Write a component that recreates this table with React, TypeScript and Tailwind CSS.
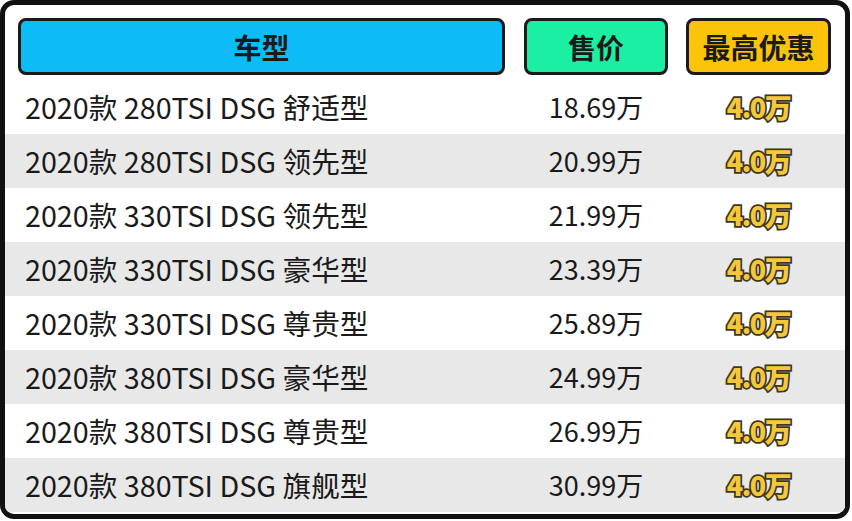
import React from "react";

interface Row {
  name: string;
  price: string;
}

const rows: Row[] = [
  {name: "2020款 280TSI DSG 舒适型", price: "18.69万"},
  {name: "2020款 280TSI DSG 领先型", price: "20.99万"},
  {name: "2020款 330TSI DSG 领先型", price: "21.99万"},
  {name: "2020款 330TSI DSG 豪华型", price: "23.39万"},
  {name: "2020款 330TSI DSG 尊贵型", price: "25.89万"},
  {name: "2020款 380TSI DSG 豪华型", price: "24.99万"},
  {name: "2020款 380TSI DSG 尊贵型", price: "26.99万"},
  {name: "2020款 380TSI DSG 旗舰型", price: "30.99万"},
];

const font = "font-['Noto_Sans_CJK_SC','Noto_Sans',sans-serif]";

const HeaderCell = ({label, className}: {label: string; className: string}) => (
  <div
    className={`h-[57px] flex items-center justify-center rounded-[8px] border-[3px] border-[#1a1a1a] text-[28px] font-bold text-[#1a1a1a] ${className}`}
  >
    {label}
  </div>
);

const App = () => {
  return (
    <div className={`w-[852px] h-[521px] bg-white ${font}`}>
      <div className="w-[850px] h-[519px] border-[5px] border-[#111] rounded-[14px] overflow-hidden bg-white">
        <div className="flex gap-[19px] px-[13px] pt-[13px] pb-[5px]">
          <HeaderCell label="车型" className="w-[487px] bg-[#0bbcf7]" />
          <HeaderCell label="售价" className="w-[144px] bg-[#1bf0a2]" />
          <HeaderCell label="最高优惠" className="w-[145px] bg-[#fcc30b] ml-[-1px]" />
        </div>
        {rows.map((row, i) => (
          <div
            key={row.name}
            className={`flex gap-[19px] px-[13px] h-[54px] items-center ${i % 2 === 1 ? "bg-[#e8e8e8]" : "bg-white"}`}
          >
            <div className="w-[487px] pl-[7px] text-[28.7px] text-[#1a1a1a] whitespace-nowrap">{row.name}</div>
            <div className="w-[144px] text-center text-[27px] text-[#1a1a1a]">{row.price}</div>
            <div className="w-[145px] ml-[-1px] text-center text-[27px] font-black tracking-[-1.5px] text-[#f5c83a] [-webkit-text-stroke:3.5px_#3d3624] [paint-order:stroke_fill]">
              4.0万
            </div>
          </div>
        ))}
      </div>
    </div>
  );
};

export default App;
